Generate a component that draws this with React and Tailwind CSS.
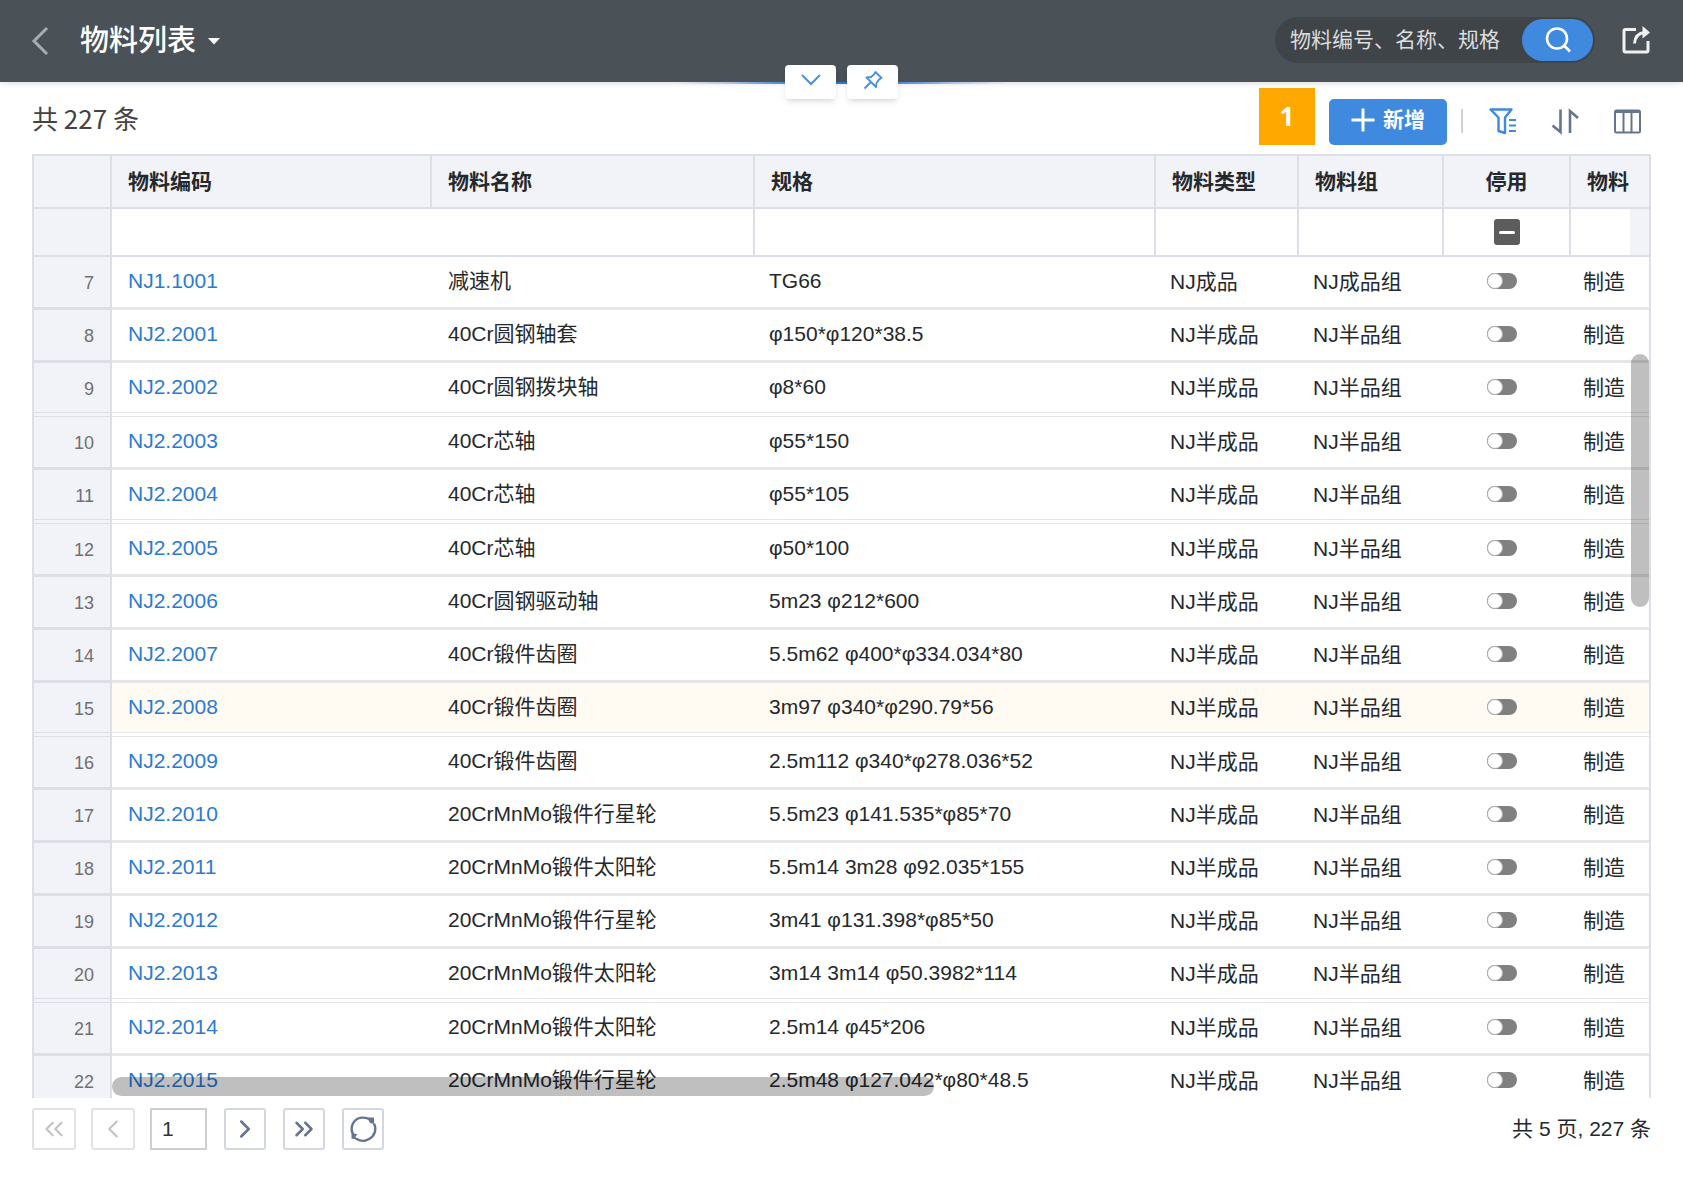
import React, { useState } from 'react';
import { ChevronLeft, ChevronRight, ChevronsLeft, ChevronsRight } from 'lucide-react';

const rows = [
  { no: 7, code: 'NJ1.1001', name: '减速机', spec: 'TG66', type: 'NJ成品', group: 'NJ成品组' },
  { no: 8, code: 'NJ2.2001', name: '40Cr圆钢轴套', spec: 'φ150*φ120*38.5' },
  { no: 9, code: 'NJ2.2002', name: '40Cr圆钢拨块轴', spec: 'φ8*60', split: true },
  { no: 10, code: 'NJ2.2003', name: '40Cr芯轴', spec: 'φ55*150' },
  { no: 11, code: 'NJ2.2004', name: '40Cr芯轴', spec: 'φ55*105', split: true },
  { no: 12, code: 'NJ2.2005', name: '40Cr芯轴', spec: 'φ50*100' },
  { no: 13, code: 'NJ2.2006', name: '40Cr圆钢驱动轴', spec: '5m23 φ212*600' },
  { no: 14, code: 'NJ2.2007', name: '40Cr锻件齿圈', spec: '5.5m62 φ400*φ334.034*80' },
  { no: 15, code: 'NJ2.2008', name: '40Cr锻件齿圈', spec: '3m97 φ340*φ290.79*56', split: true, active: true },
  { no: 16, code: 'NJ2.2009', name: '40Cr锻件齿圈', spec: '2.5m112 φ340*φ278.036*52' },
  { no: 17, code: 'NJ2.2010', name: '20CrMnMo锻件行星轮', spec: '5.5m23 φ141.535*φ85*70' },
  { no: 18, code: 'NJ2.2011', name: '20CrMnMo锻件太阳轮', spec: '5.5m14 3m28 φ92.035*155' },
  { no: 19, code: 'NJ2.2012', name: '20CrMnMo锻件行星轮', spec: '3m41 φ131.398*φ85*50' },
  { no: 20, code: 'NJ2.2013', name: '20CrMnMo锻件太阳轮', spec: '3m14 3m14 φ50.3982*114', split: true },
  { no: 21, code: 'NJ2.2014', name: '20CrMnMo锻件太阳轮', spec: '2.5m14 φ45*206' },
  { no: 22, code: 'NJ2.2015', name: '20CrMnMo锻件行星轮', spec: '2.5m48 φ127.042*φ80*48.5' },
];

function Header() {
  return (
    <header className="relative z-10 flex h-[82px] shrink-0 items-center justify-between bg-[#4a5157] pr-8 pl-7 shadow-[0_1px_6px_rgba(0,0,0,0.15)]">
      <div className="flex items-center">
        <button aria-label="返回" className="text-[#a9adb0]">
          <svg width="24" height="32" viewBox="0 0 24 32" fill="none" stroke="currentColor" strokeWidth="3">
            <path d="M19 3L6 16l13 13" />
          </svg>
        </button>
        <button className="ml-7 flex items-center gap-3 text-[29px] leading-10 font-medium text-white">
          <h1>物料列表</h1>
          <svg width="12" height="8" viewBox="0 0 12 8" fill="currentColor">
            <path d="M0 1h12L6 7.500z" />
          </svg>
        </button>
      </div>

      <div className="flex items-center gap-[26px] pb-[2px]">
        <form className="flex h-[46px] w-[320px] items-center rounded-full bg-[#3f4448] pr-[2px] pl-[15px]" onSubmit={(e) => e.preventDefault()}>
          <input
            type="text"
            aria-label="搜索物料"
            placeholder="物料编号、名称、规格"
            className="min-w-0 flex-1 bg-transparent text-[21px] leading-8 text-white outline-none placeholder:text-[#dcdddd]"
          />
          <button aria-label="搜索" className="flex h-[42px] w-[71px] items-center justify-center rounded-full bg-[#3f89df] text-white">
            <svg width="28" height="28" viewBox="0 0 28 28" fill="none" stroke="currentColor" strokeWidth="2.600">
              <circle cx="13" cy="12.500" r="10" />
              <path d="M20 19.500l6 6" />
            </svg>
          </button>
        </form>
        <button aria-label="分享" className="text-[#f1f1f1]">
          <svg width="30" height="30" viewBox="0 0 30 30" fill="none" stroke="currentColor" strokeWidth="3">
            <path d="M15 4.500H4.500Q3 4.500 3 6v19.500Q3 27 4.500 27h21q1.500 0 1.500-1.500V16" />
            <path d="M13.500 18.500C14 11.500 18 8 24 7.500" />
            <path d="M21.500 1l7.500 6.500-7.500 6z" fill="currentColor" stroke="none" />
          </svg>
        </button>
      </div>

      {/* 折叠 / 固定 */}
      <div className="absolute inset-x-0 bottom-0 flex h-0 items-center justify-center">
        <div className="absolute top-0 h-[2px] w-[336px] bg-linear-to-r from-transparent via-[#2f78cf] via-50% to-transparent" />
        <div className="absolute top-0 h-[2px] w-[220px] bg-linear-to-r from-transparent via-[#2f78cf] via-50% to-transparent" />
        <div className="relative flex gap-[11px]">
          <button aria-label="展开" className="flex h-[34px] w-[51px] items-center justify-center rounded bg-white pb-1 text-[#4a90e2] shadow-md">
            <svg width="22" height="14" viewBox="0 0 22 14" fill="none" stroke="currentColor" strokeWidth="2">
              <path d="M2 2l9 9 9-9" />
            </svg>
          </button>
          <button aria-label="固定" className="flex h-[34px] w-[51px] items-center justify-center rounded bg-white pb-1 text-[#4a90e2] shadow-md">
            <svg width="20" height="20" viewBox="0 0 20 20" fill="none" stroke="currentColor" strokeWidth="1.900" strokeLinejoin="round">
              <path d="M12.500 2l6 6-2.500 1.500-2.500 3.500-.5 4-9.500-9.500 4.500-.5L11 4.500z" />
              <path d="M7.500 12.500L1.500 18.500" />
            </svg>
          </button>
        </div>
      </div>
    </header>
  );
}

function Toolbar() {
  return (
    <div className="flex h-[72px] shrink-0 items-end justify-between pb-[9px]">
      <p className="text-[26px] leading-[54px] text-[#444] font-['Noto_Sans_CJK_SC',sans-serif]">共 227 条</p>
      <div className="flex items-end gap-[14px] pr-[10px]">
        <span className="flex h-[57px] w-14 items-center justify-center bg-[#ffa900] text-[26px] font-bold text-white font-['Open_Sans',sans-serif]">1</span>
        <button className="flex h-[46px] w-[118px] items-center justify-center gap-2 rounded-[5px] bg-[#3f89df] pb-1 text-[21px] leading-8 font-bold text-white">
          <svg width="24" height="24" viewBox="0 0 24 24" fill="none" stroke="currentColor" strokeWidth="3">
            <path d="M12 0.500v23M0.500 12h23" />
          </svg>
          新增
        </button>
        <div className="flex h-12 items-center">
          <span className="mr-[26px] h-6 w-[2px] bg-[#d0d2d6]" />
          <div className="flex gap-[34px] text-[#66758f]">
            <button aria-label="筛选" className="text-[#3f89df]">
              <svg width="28" height="28" viewBox="0 0 28 28" fill="none" stroke="currentColor" strokeWidth="2.400" strokeLinejoin="round">
                <path d="M1.500 2.500h21L16 10.500v15.500L9.500 24V10.500z" />
                <path d="M20 13h7M20 18.500h7M20 24h7" strokeWidth="2.200" />
              </svg>
            </button>
            <button aria-label="排序">
              <svg width="28" height="28" viewBox="0 0 28 28" fill="none" stroke="currentColor" strokeWidth="2.600">
                <path d="M9.500 2.500V25L1.500 18.500" />
                <path d="M19 26V4L27 11" />
              </svg>
            </button>
            <button aria-label="列设置">
              <svg width="28" height="28" viewBox="0 0 28 28" fill="none" stroke="currentColor" strokeWidth="2">
                <rect x="2" y="3.500" width="25" height="22" rx="1.500" />
                <path d="M10.500 3.500v22M18.500 3.500v22" />
                <path d="M2 4.500h25" strokeWidth="3" />
              </svg>
            </button>
          </div>
        </div>
      </div>
    </div>
  );
}

function HeadCell({ children, center }) {
  return (
    <th scope="col" className={`overflow-hidden border-y-2 border-r-2 border-[#dcdfe8] bg-[#f2f3f8] px-4 font-bold whitespace-nowrap ${center ? 'text-center' : 'text-left'}`}>
      {children}
    </th>
  );
}

function FilterCell({ label, line = true }) {
  return (
    <td className={`border-b-2 border-[#dcdfe8] ${line ? 'border-r-2' : ''}`}>
      <input type="text" aria-label={label} className="block h-8 w-full bg-transparent px-4 outline-none" />
    </td>
  );
}

function Row({ row }) {
  const [disabled, setDisabled] = useState(false);
  const line = row.split
    ? 'h-[54px] shadow-[inset_0_-1px_0_#e6e6e6,inset_0_-4px_0_#fff,inset_0_-5px_0_#e6e6e6]'
    : 'h-[53px] shadow-[inset_0_-3px_0_#e6e6e6]';
  const noLine = row.split
    ? 'shadow-[inset_0_-1px_0_#dcdfe8,inset_0_-4px_0_#f2f3f8,inset_0_-5px_0_#dcdfe8]'
    : 'shadow-[inset_0_-3px_0_#dcdfe8]';

  return (
    <tr className={row.active ? 'bg-[#fffaf2]' : 'bg-white'}>
      <td className={`border-x-2 border-[#dcdfe8] bg-[#f2f3f8] pr-4 pb-[2px] text-right text-lg text-[#707070] ${noLine}`}>{row.no}</td>
      <td className={`pb-[6px] pl-4 ${line}`}>
        <a href={'#' + row.code} className="text-[#2b7ad2]">{row.code}</a>
      </td>
      <td className={`pb-[6px] pl-4 ${line}`}>{row.name}</td>
      <td className={`pb-[6px] pl-[14px] ${line}`}>{row.spec}</td>
      <td className={`pb-1 pl-[14px] ${line}`}>{row.type || 'NJ半成品'}</td>
      <td className={`pb-1 pl-[14px] ${line}`}>{row.group || 'NJ半品组'}</td>
      <td className={`pr-3 pb-[6px] ${line}`}>
        <input
          type="checkbox"
          role="switch"
          aria-label={'停用 ' + row.code}
          checked={disabled}
          onChange={(e) => setDisabled(e.target.checked)}
          className="mx-auto block h-4 w-[30px] appearance-none rounded-full bg-[#808080] before:block before:size-4 before:rounded-full before:border before:border-[#b0b0b0] before:bg-white checked:bg-[#3f89df] checked:before:ml-auto"
        />
      </td>
      <td className={`border-r-2 border-r-[#dcdfe8] pb-1 pl-3 ${line}`}>制造</td>
    </tr>
  );
}

function MaterialTable() {
  return (
    <div className="relative min-h-0 flex-1 overflow-hidden">
      <table className="w-full table-fixed border-separate border-spacing-0 text-[21px] leading-8 whitespace-nowrap text-[#25282c]">
        <colgroup>
          <col className="w-[80px]" />
          <col className="w-[320px]" />
          <col className="w-[323px]" />
          <col className="w-[401px]" />
          <col className="w-[143px]" />
          <col className="w-[145px]" />
          <col className="w-[127px]" />
          <col className="w-[80px]" />
        </colgroup>
        <thead>
          <tr className="h-[55px]">
            <td className="border-2 border-[#dcdfe8] bg-[#f2f3f8]" />
            <HeadCell>物料编码</HeadCell>
            <HeadCell>物料名称</HeadCell>
            <HeadCell>规格</HeadCell>
            <HeadCell>物料类型</HeadCell>
            <HeadCell>物料组</HeadCell>
            <HeadCell center>停用</HeadCell>
            <HeadCell>物料</HeadCell>
          </tr>
          <tr className="h-[48px]">
            <td className="border-x-2 border-b-2 border-[#dcdfe8] bg-[#f2f3f8]" />
            <FilterCell label="筛选物料编码" line={false} />
            <FilterCell label="筛选物料名称" />
            <FilterCell label="筛选规格" />
            <FilterCell label="筛选物料类型" />
            <FilterCell label="筛选物料组" />
            <td className="border-r-2 border-b-2 border-[#dcdfe8]">
              <input
                type="checkbox"
                aria-label="筛选停用"
                ref={(el) => { if (el) el.indeterminate = true; }}
                className="mx-auto flex size-[26px] appearance-none items-center justify-center rounded-[3px] bg-[#5c5c5c] before:h-[3px] before:w-4 before:rounded-full before:bg-white"
              />
            </td>
            <td className="border-r-2 border-b-2 border-[#dcdfe8] p-0">
              <div className="ml-auto h-[46px] w-[19px] bg-[#f2f3f8]" />
            </td>
          </tr>
        </thead>
        <tbody>
          {rows.map((row) => (
            <Row key={row.no} row={row} />
          ))}
        </tbody>
      </table>

      {/* 滚动条 */}
      <div className="absolute top-[200px] right-[2px] h-[253px] w-[18px] rounded-full bg-black/25" />
      <div className="absolute bottom-[2px] left-20 h-[19px] w-[822px] rounded-full bg-black/25" />
    </div>
  );
}

function Pager() {
  const [page, setPage] = useState('1');

  return (
    <footer className="flex h-[83px] shrink-0 items-start justify-between pt-[10px]">
      <div className="flex gap-[17px]">
        <div className="flex gap-[15px]">
          <button aria-label="首页" disabled className="flex h-[42px] w-11 items-center justify-center rounded-[3px] border-2 border-[#e2e2e2] text-[#c4c4c4]">
            <ChevronsLeft size={30} strokeWidth={1.8} />
          </button>
          <button aria-label="上一页" disabled className="flex h-[42px] w-11 items-center justify-center rounded-[3px] border-2 border-[#e2e2e2] text-[#c4c4c4]">
            <ChevronLeft size={30} strokeWidth={1.8} />
          </button>
          <input
            type="text"
            aria-label="页码"
            value={page}
            onChange={(e) => setPage(e.target.value)}
            className="h-[42px] w-[57px] border-2 border-[#cfcfcf] pl-[10px] text-[21px] text-[#333] outline-none"
          />
        </div>
        <div className="flex gap-[17px]">
          <button aria-label="下一页" className="flex h-[42px] w-[42px] items-center justify-center rounded-[3px] border-2 border-[#d3d7df] text-[#66758f]">
            <ChevronRight size={30} strokeWidth={2} />
          </button>
          <button aria-label="末页" className="flex h-[42px] w-[42px] items-center justify-center rounded-[3px] border-2 border-[#d3d7df] text-[#66758f]">
            <ChevronsRight size={30} strokeWidth={2} />
          </button>
          <button aria-label="刷新" className="flex h-[42px] w-[42px] items-center justify-center rounded-[3px] border-2 border-[#d3d7df] text-[#66758f]">
            <svg width="28" height="28" viewBox="0 0 28 28" fill="none" stroke="currentColor" strokeWidth="2.400">
              <path d="M4.500 20A11.500 11.500 0 0 1 9 3.500Q14 1.500 20 4" />
              <path d="M25 8.500A11.500 11.500 0 0 1 20 24Q14 28 7 23.500" />
              <path d="M18 2.500h7v6.500l-4-1z" fill="currentColor" stroke="none" />
              <path d="M2.500 18.500l6 .5-2 2.500 1.500 3-5.500-1z" fill="currentColor" stroke="none" />
            </svg>
          </button>
        </div>
      </div>
      <p className="text-[21px] leading-[42px] text-[#25282c]">共 5 页, 227 条</p>
    </footer>
  );
}

export default function App() {
  return (
    <div className="flex h-screen flex-col overflow-hidden bg-white font-['Liberation_Sans','Noto_Sans_CJK_SC',sans-serif]">
      <Header />
      <main className="flex min-h-0 flex-1 flex-col px-8">
        <Toolbar />
        <MaterialTable />
        <Pager />
      </main>
    </div>
  );
}
